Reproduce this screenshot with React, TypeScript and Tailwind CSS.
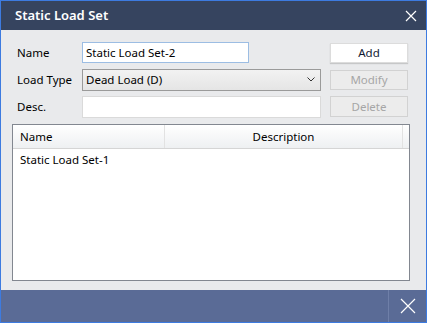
import React from "react";

export default function App() {
  const font = { fontFamily: '"Noto Sans", "Segoe UI", sans-serif' };
  return (
    <div
      className="w-[427px] h-[323px] border border-[#3d7be0] flex flex-col bg-[#e9eaec] text-[11.5px] text-black overflow-hidden"
      style={font}
    >
      {/* Title bar */}
      <div className="h-[29px] shrink-0 bg-[#36445f] flex items-center justify-between pl-[14px] pr-[9px]">
        <span className="text-white text-[13px] font-semibold">Static Load Set</span>
        <svg width="12" height="12" viewBox="0 0 12 12" className="mt-[1px]">
          <path d="M1 1L11 11M11 1L1 11" stroke="#ffffff" strokeWidth="1.2" fill="none" />
        </svg>
      </div>

      {/* Content */}
      <div className="flex-1 flex flex-col pt-[12px] pl-[11px] pr-[16px] pb-[9px]">
        <div className="flex flex-col gap-[6px]">
          {/* Name row */}
          <div className="flex items-center h-[21px]">
            <span className="w-[70px] pl-[5px] shrink-0">Name</span>
            <div className="w-[167px] h-[21px] bg-white border border-[#9cbde3] flex items-center px-[3px] leading-none">
              Static Load Set-2
            </div>
            <div className="flex-1" />
            <button className="w-[78px] mr-[2px] h-[20px] bg-white border border-[#dcdcdc] shadow-[0_1px_1px_rgba(0,0,0,0.15)] text-[#111a33] flex items-center justify-center leading-none">
              Add
            </button>
          </div>
          {/* Load Type row */}
          <div className="flex items-center h-[21px]">
            <span className="w-[70px] pl-[5px] shrink-0">Load Type</span>
            <div className="w-[239px] h-[22px] border border-[#9a9a9a] bg-gradient-to-b from-[#f2f2f2] to-[#e5e5e5] flex items-center justify-between pl-[3px] pr-[5px] leading-none">
              <span>Dead Load (D)</span>
              <svg width="8" height="5" viewBox="0 0 8 5">
                <path d="M0.5 0.5L4 4L7.5 0.5" stroke="#333" strokeWidth="1" fill="none" />
              </svg>
            </div>
            <div className="flex-1" />
            <button className="w-[78px] mr-[2px] h-[20px] bg-[#ececec] border border-[#d2d2d2] text-[#a6a6a6] flex items-center justify-center leading-none">
              Modify
            </button>
          </div>
          {/* Desc row */}
          <div className="flex items-center h-[21px]">
            <span className="w-[70px] pl-[5px] shrink-0">Desc.</span>
            <div className="w-[239px] h-[22px] bg-white border border-[#dadada]" />
            <div className="flex-1" />
            <button className="w-[78px] mr-[2px] h-[21px] bg-[#ececec] border border-[#d2d2d2] text-[#a6a6a6] flex items-center justify-center leading-none">
              Delete
            </button>
          </div>
        </div>

        {/* Table */}
        <div className="mt-[7px] flex-1 bg-white border border-[#828790] flex flex-col">
          <div className="h-[24px] flex bg-gradient-to-b from-[#ffffff] to-[#eef0f2] border-b border-[#d5d5d5]">
            <div className="w-[152px] pl-[7px] flex items-center border-r border-[#e2e2e2]">Name</div>
            <div className="w-[238px] flex items-center justify-center border-r border-[#e2e2e2]">Description</div>
            <div className="flex-1" />
          </div>
          <div className="pl-[7px] pt-[2px]">Static Load Set-1</div>
        </div>
      </div>

      {/* Footer */}
      <div className="h-[32px] shrink-0 bg-[#5a6b96] flex justify-end">
        <div className="w-[38px] border-l border-[#6f7fa8] flex items-center justify-center">
          <svg width="16" height="16" viewBox="0 0 16 16">
            <path d="M1 1L15 15M15 1L1 15" stroke="#ffffff" strokeWidth="1.2" fill="none" />
          </svg>
        </div>
      </div>
    </div>
  );
}
